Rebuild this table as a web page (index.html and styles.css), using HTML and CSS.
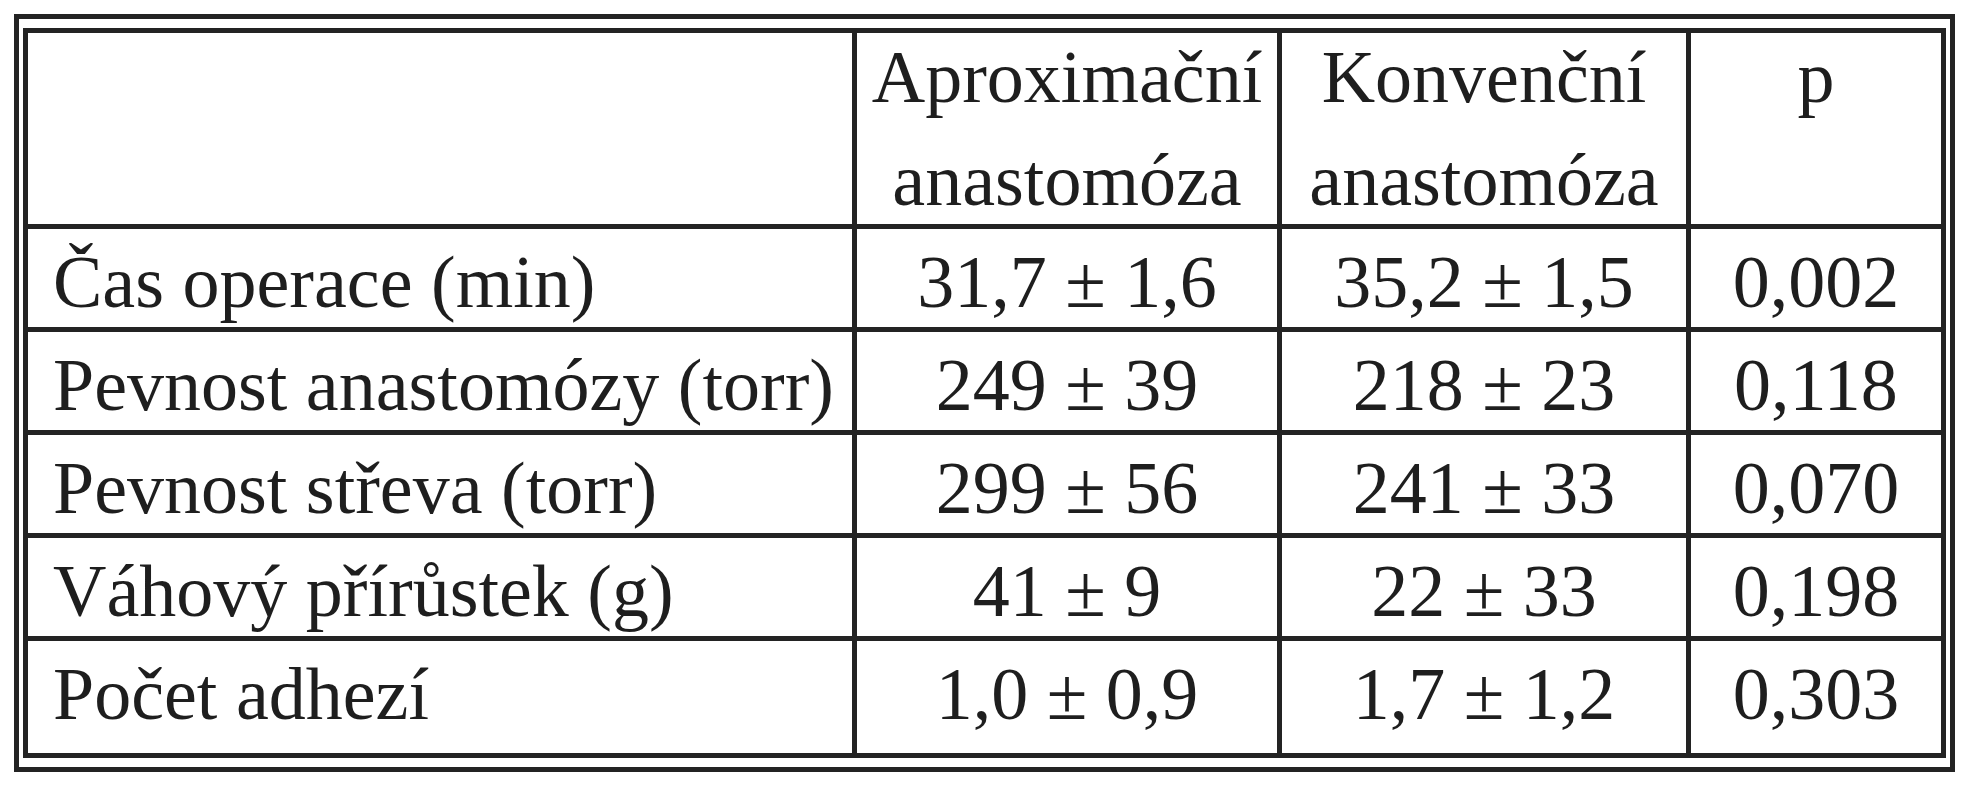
FILE: index.html
```html
<!DOCTYPE html>
<html lang="cs">
<head>
<meta charset="utf-8">
<title>Výsledky</title>
<link rel="stylesheet" href="styles.css">
</head>
<body>
<div class="frame">
  <table class="results">
    <colgroup>
      <col class="c-label">
      <col class="c-aprox">
      <col class="c-konv">
      <col class="c-p">
    </colgroup>
    <thead>
      <tr class="head-row">
        <th></th>
        <th><span class="line">Aproximační</span><span class="line second">anastomóza</span></th>
        <th><span class="line">Konvenční</span><span class="line second">anastomóza</span></th>
        <th><span class="line">p</span></th>
      </tr>
    </thead>
    <tbody>
      <tr>
        <td class="label">Čas operace (min)</td>
        <td>31,7 ± 1,6</td>
        <td>35,2 ± 1,5</td>
        <td>0,002</td>
      </tr>
      <tr>
        <td class="label">Pevnost anastomózy (torr)</td>
        <td>249 ± 39</td>
        <td>218 ± 23</td>
        <td>0,118</td>
      </tr>
      <tr>
        <td class="label">Pevnost střeva (torr)</td>
        <td>299 ± 56</td>
        <td>241 ± 33</td>
        <td>0,070</td>
      </tr>
      <tr>
        <td class="label">Váhový přírůstek (g)</td>
        <td>41 ± 9</td>
        <td>22 ± 33</td>
        <td>0,198</td>
      </tr>
      <tr class="last-row">
        <td class="label">Počet adhezí</td>
        <td>1,0 ± 0,9</td>
        <td>1,7 ± 1,2</td>
        <td>0,303</td>
      </tr>
    </tbody>
  </table>
</div>
</body>
</html>
```
FILE: styles.css
```css
html, body {
  margin: 0;
  padding: 0;
  background: #ffffff;
}

body {
  font-family: "Liberation Serif", "Times New Roman", serif;
  color: #1e1e1e;
}

.frame {
  width: fit-content;
  margin: 14px 0 0 14px;
  border: 5px solid #232323;
  padding: 9px 4px 9px 4px;
}

.results {
  border-collapse: separate;
  border-spacing: 0;
  table-layout: fixed;
  width: 1923px;
  border-top: 5px solid #232323;
  border-left: 5px solid #232323;
}

.c-label { width: 829px; }
.c-aprox { width: 425px; }
.c-konv { width: 409px; }
.c-p { width: 255px; }

.results th,
.results td {
  box-sizing: border-box;
  border-right: 5px solid #232323;
  border-bottom: 5px solid #232323;
  padding: 16px 0 0 0;
  height: 103px;
  vertical-align: top;
  text-align: center;
  font-size: 74px;
  line-height: 74px;
  font-weight: 400;
  white-space: nowrap;
}

.results .head-row th {
  height: 196px;
  padding-top: 7px;
}

.line {
  display: block;
}

.line.second {
  margin-top: 29px;
}

.results td.label {
  text-align: left;
  padding-left: 25px;
}

.results .last-row td {
  height: 117px;
}
```
